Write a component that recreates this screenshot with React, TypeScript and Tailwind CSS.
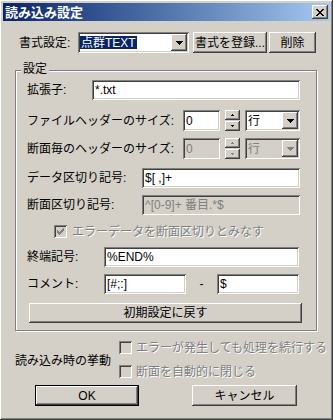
import React from 'react';

const SUNKEN =
  'shadow-[inset_1px_1px_0_#808080,inset_-1px_-1px_0_#fff,inset_2px_2px_0_#404040,inset_-2px_-2px_0_#d4d0c8]';
const RAISED =
  'shadow-[inset_-1px_-1px_0_#404040,inset_1px_1px_0_#fff,inset_-2px_-2px_0_#808080,inset_2px_2px_0_#d4d0c8]';
const GRAY_TEXT = 'text-[#808080] [text-shadow:1px_1px_0_#fff]';

const CloseGlyph = () => (
  <svg width="8" height="7" viewBox="0 0 8 7" shapeRendering="crispEdges">
    <path
      fill="#000"
      d="M0 0h2v1h-2z M6 0h2v1h-2z M1 1h2v1h-2z M5 1h2v1h-2z M2 2h4v1h-4z M3 3h2v1h-2z M2 4h4v1h-4z M1 5h2v1h-2z M5 5h2v1h-2z M0 6h2v1h-2z M6 6h2v1h-2z"
    />
  </svg>
);

const DownArrow = ({ disabled }: { disabled?: boolean }) => (
  <svg width="7" height="4" viewBox="0 0 7 4" shapeRendering="crispEdges">
    <path fill={disabled ? '#808080' : '#000'} d="M0 0h7v1h-7z M1 1h5v1h-5z M2 2h3v1h-3z M3 3h1v1h-1z" />
  </svg>
);

const SmallArrow = ({ up, disabled }: { up?: boolean; disabled?: boolean }) => (
  <svg width="3" height="2" viewBox="0 0 3 2" shapeRendering="crispEdges">
    <path
      fill={disabled ? '#808080' : '#000'}
      d={up ? 'M1 0h1v1h-1z M0 1h3v1h-3z' : 'M0 0h3v1h-3z M1 1h1v1h-1z'}
    />
  </svg>
);

const CheckMark = ({ disabled }: { disabled?: boolean }) => (
  <svg width="7" height="7" viewBox="0 0 7 7" shapeRendering="crispEdges">
    <path
      fill={disabled ? '#808080' : '#000'}
      d="M6 0h1v1h-1z M5 1h2v1h-2z M0 2h1v1h-1z M4 2h3v1h-3z M0 3h2v1h-2z M3 3h3v1h-3z M0 4h5v1h-5z M1 5h3v1h-3z M2 6h1v1h-1z"
    />
  </svg>
);

interface EditProps {
  className: string;
  value: string;
  disabled?: boolean;
}

const Edit = ({ className, value, disabled }: EditProps) => (
  <div
    className={`${SUNKEN} ${className} flex items-center pl-[3px] whitespace-nowrap overflow-hidden ${
      disabled ? 'bg-[#d4d0c8] text-[#808080]' : 'bg-white text-black'
    }`}
  >
    {value}
  </div>
);

interface ComboProps {
  className: string;
  value: string;
  disabled?: boolean;
  selected?: boolean;
}

const Combo = ({ className, value, disabled, selected }: ComboProps) => (
  <div
    className={`${SUNKEN} ${className} h-[21px] flex items-center pl-[2px] pr-[2px] ${
      disabled ? 'bg-[#d4d0c8]' : 'bg-white'
    }`}
  >
    <div className="flex-1 flex items-center overflow-hidden">
      {selected ? (
        <span className="bg-[#0a246a] text-white h-[13px] flex items-center px-[1px]">{value}</span>
      ) : (
        <span className={`pl-[1px] ${disabled ? 'text-[#808080]' : 'text-black'}`}>{value}</span>
      )}
    </div>
    <div className={`${RAISED} w-[16px] h-[17px] bg-[#d4d0c8] flex items-center justify-center`}>
      <DownArrow disabled={disabled} />
    </div>
  </div>
);

const Spinner = ({ disabled }: { disabled?: boolean }) => (
  <div className="w-[15px] h-[21px] flex flex-col gap-[1px]">
    <div className={`${RAISED} h-[10px] bg-[#d4d0c8] flex items-center justify-center`}>
      <SmallArrow up disabled={disabled} />
    </div>
    <div className={`${RAISED} h-[10px] bg-[#d4d0c8] flex items-center justify-center`}>
      <SmallArrow disabled={disabled} />
    </div>
  </div>
);

interface ButtonProps {
  className: string;
  children: React.ReactNode;
  isDefault?: boolean;
}

const Button = ({ className, children, isDefault }: ButtonProps) =>
  isDefault ? (
    <div className={`${className} border border-black flex`}>
      <div className={`${RAISED} flex-1 bg-[#d4d0c8] flex items-center justify-center`}>{children}</div>
    </div>
  ) : (
    <div className={`${RAISED} ${className} bg-[#d4d0c8] flex items-center justify-center whitespace-nowrap`}>
      {children}
    </div>
  );

const CheckBox = ({ checked, disabled }: { checked?: boolean; disabled?: boolean }) => (
  <div
    className={`${SUNKEN} w-[13px] h-[13px] shrink-0 flex items-center justify-center ${
      disabled ? 'bg-[#d4d0c8]' : 'bg-white'
    }`}
  >
    {checked && <CheckMark disabled={disabled} />}
  </div>
);

export default function App() {
  return (
    <div
      className={`w-[333px] h-[420px] bg-[#d4d0c8] p-[3px] ${RAISED} flex flex-col overflow-hidden font-['Liberation_Sans','Noto_Sans_CJK_JP',sans-serif] text-[12px] leading-none text-black select-none`}
    >
      {/* title bar */}
      <div className="h-[18px] shrink-0 bg-linear-to-r from-[#0a246a] to-[#a6caf0] flex items-center justify-between pl-[2px] pr-[2px]">
        <span className="text-white font-bold text-[13px] leading-none">読み込み設定</span>
        <div className={`${RAISED} w-[16px] h-[14px] bg-[#d4d0c8] flex items-center justify-center`}>
          <CloseGlyph />
        </div>
      </div>

      {/* format row */}
      <div className="mt-[11px] h-[21px] flex items-center pl-[16px]">
        <span className="w-[59px]">書式設定:</span>
        <Combo className="w-[111px]" value="点群TEXT" selected />
        <Button className="ml-[4px] w-[74px] h-[21px]">書式を登録...</Button>
        <Button className="ml-[2px] w-[47px] h-[21px]">削除</Button>
      </div>

      {/* settings group */}
      <div className="relative mt-[17px] ml-[12px] w-[302px] h-[261px] border border-[#808080] shadow-[inset_1px_1px_0_#fff,1px_1px_0_#fff] flex flex-col">
        <span className="absolute -top-[8px] left-[5px] px-[2px] bg-[#d4d0c8]">設定</span>

        <div className="mt-[9px] h-[20px] flex items-center pl-[11px]">
          <span className="w-[65px]">拡張子:</span>
          <Edit className="w-[208px] h-[20px]" value="*.txt" />
        </div>

        <div className="mt-[10px] h-[21px] flex items-center pl-[11px]">
          <span className="w-[156px]">ファイルヘッダーのサイズ:</span>
          <Edit className="w-[37px] h-[21px]" value="0" />
          <div className="ml-[5px]">
            <Spinner />
          </div>
          <Combo className="ml-[5px] w-[55px]" value="行" />
        </div>

        <div className="mt-[7px] h-[21px] flex items-center pl-[11px]">
          <span className="w-[156px]">断面毎のヘッダーのサイズ:</span>
          <Edit className="w-[37px] h-[21px]" value="0" disabled />
          <div className="ml-[5px]">
            <Spinner disabled />
          </div>
          <Combo className="ml-[5px] w-[55px]" value="行" disabled />
        </div>

        <div className="mt-[9px] h-[20px] flex items-center pl-[11px]">
          <span className="w-[115px]">データ区切り記号:</span>
          <Edit className="w-[158px] h-[20px]" value="$[ ,]+" />
        </div>

        <div className="mt-[7px] h-[20px] flex items-center pl-[11px]">
          <span className="w-[115px]">断面区切り記号:</span>
          <Edit className="w-[158px] h-[20px]" value="^[0-9]+ 番目.*$" disabled />
        </div>

        <div className="mt-[10px] h-[13px] flex items-center pl-[38px] gap-[5px]">
          <CheckBox checked disabled />
          <span className={GRAY_TEXT}>エラーデータを断面区切りとみなす</span>
        </div>

        <div className="mt-[9px] h-[20px] flex items-center pl-[11px]">
          <span className="w-[77px]">終端記号:</span>
          <Edit className="w-[195px] h-[20px]" value="%END%" />
        </div>

        <div className="mt-[7px] h-[20px] flex items-center pl-[11px]">
          <span className="w-[77px]">コメント:</span>
          <Edit className="w-[82px] h-[20px]" value="[#;:]" />
          <span className="w-[31px] text-center">-</span>
          <Edit className="w-[82px] h-[20px]" value="$" />
        </div>

        <div className="mt-[9px] pl-[13px] flex">
          <Button className="w-[273px] h-[20px]">初期設定に戻す</Button>
        </div>
      </div>

      {/* behaviour on load */}
      <div className="mt-[10px] flex items-center pl-[12px]">
        <span className="w-[104px] pt-[3px]">読み込み時の挙動</span>
        <div className="flex flex-col gap-[11px]">
          <div className="h-[13px] flex items-center gap-[4px]">
            <CheckBox disabled />
            <span className={GRAY_TEXT}>エラーが発生しても処理を続行する</span>
          </div>
          <div className="h-[13px] flex items-center gap-[4px]">
            <CheckBox disabled />
            <span className={GRAY_TEXT}>断面を自動的に閉じる</span>
          </div>
        </div>
      </div>

      {/* dialog buttons */}
      <div className="mt-[7px] flex pl-[32px] gap-[53px]">
        <Button className="w-[104px] h-[21px]" isDefault>
          OK
        </Button>
        <Button className="w-[105px] h-[21px]">キャンセル</Button>
      </div>
    </div>
  );
}
